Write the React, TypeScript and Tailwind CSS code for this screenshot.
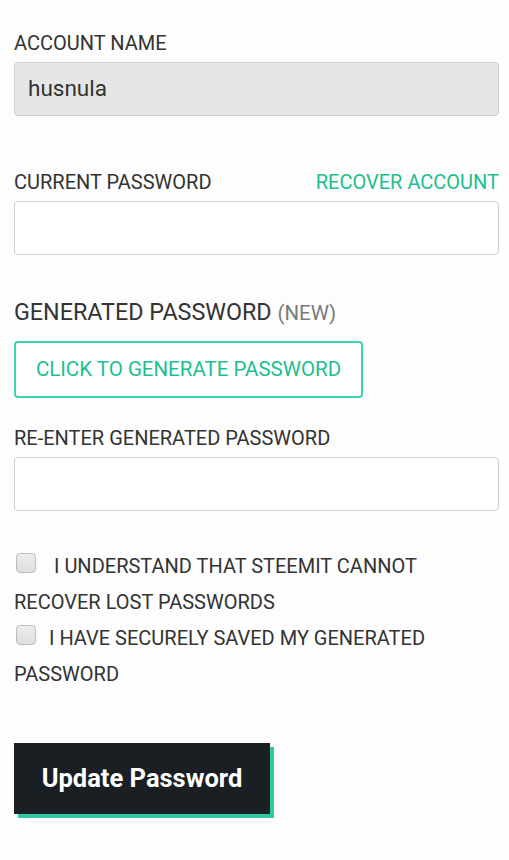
import React from "react";

export default function App() {
  return (
    <div className="min-h-[860px] w-[509px] bg-[#fdfdfd] pl-[14px] pr-[10px] pt-[30px] text-[#333]" style={{ fontFamily: "Roboto, 'Liberation Sans', sans-serif" }}>
      <label className="block text-[20px] leading-[26px] text-[#333]">ACCOUNT NAME</label>
      <div className="mt-[6px] flex h-[54px] items-center rounded-[4px] border border-[#cfcfcf] bg-[#e6e6e6] px-[13px] text-[22.5px] text-[#333]">
        husnula
      </div>

      <div className="mt-[53px] flex items-center justify-between text-[20px] leading-[26px]">
        <span>CURRENT PASSWORD</span>
        <span className="text-[#21bf8f]">RECOVER ACCOUNT</span>
      </div>
      <div className="mt-[6px] h-[54px] rounded-[4px] border border-[#cfcfcf] bg-white" />

      <div className="mt-[43px] text-[23.3px] leading-[28px]">
        GENERATED PASSWORD <span className="text-[20.5px] text-[#7a7a7a]">(NEW)</span>
      </div>
      <button className="mt-[14px] flex h-[57px] w-[349px] items-center justify-center rounded-[4px] border-2 border-[#3dd2b0] bg-white text-[20.5px] text-[#21bf8f]">
        CLICK TO GENERATE PASSWORD
      </button>

      <label className="mt-[27px] block text-[20px] leading-[26px]">RE-ENTER GENERATED PASSWORD</label>
      <div className="mt-[6px] h-[54px] rounded-[4px] border border-[#cfcfcf] bg-white" />

      <div className="mt-[37px] text-[20px] leading-[36px]">
        <span className="relative top-[-5px] mr-[18px] ml-[2px] inline-block h-[20px] w-[20px] rounded-[4px] border border-[#bdbdbd] bg-gradient-to-b from-[#ececec] to-[#dedede] align-middle" />
        I UNDERSTAND THAT STEEMIT CANNOT RECOVER LOST PASSWORDS
      </div>
      <div className="text-[20px] leading-[36px]">
        <span className="relative top-[-5px] mr-[13px] ml-[2px] inline-block h-[20px] w-[20px] rounded-[4px] border border-[#bdbdbd] bg-gradient-to-b from-[#ececec] to-[#dedede] align-middle" />
        I HAVE SECURELY SAVED MY GENERATED PASSWORD
      </div>

      <button className="mt-[51px] h-[71px] w-[256px] bg-[#1a1f24] text-[25.5px] font-bold text-white shadow-[4px_4px_0_#2ec9a0]">
        Update Password
      </button>
    </div>
  );
}
